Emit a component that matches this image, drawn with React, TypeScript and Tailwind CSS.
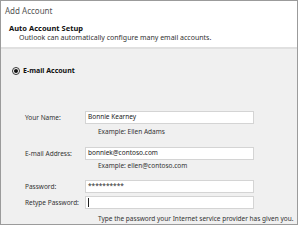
import React from 'react';

const font = { fontFamily: '"Noto Sans", "Open Sans", Arial, sans-serif' };

function Field({ label, value, cursor }: { label: string; value?: string; cursor?: boolean }) {
  return (
    <div className="flex items-center h-[13px]">
      <div className="w-[60px] pl-[24px] box-content text-[6.5px] text-[#333] whitespace-nowrap">{label}</div>
      <div className="w-[169px] h-[13px] bg-white border border-[#d4d4d4] flex items-center px-[2px] text-[6.5px] text-[#222] leading-none">
        {cursor && <span className="w-px h-[9px] bg-[#222]" />}
        {value}
      </div>
    </div>
  );
}

export default function App() {
  return (
    <div className="w-[300px] h-[226px] bg-white" style={font}>
      <div className="w-[298px] h-[225px] border border-[#9b9b9b] flex flex-col overflow-hidden">
        <div className="h-[48px] bg-white flex flex-col">
          <div className="pl-[4px] pt-[4px] text-[8px] text-[#555] leading-[11px]">Add Account</div>
          <div className="pl-[8px] pt-[7px] text-[7.5px] font-bold text-[#111] leading-[10px]">Auto Account Setup</div>
          <div className="pl-[18px] text-[7px] text-[#333] leading-[10px]">Outlook can automatically configure many email accounts.</div>
        </div>
        <div className="h-[2px] bg-[#e0e0e0]" />
        <div className="flex-1 bg-[#f0f0f0] flex flex-col">
          <div className="flex items-center pl-[11px] pt-[17px] gap-[3px]">
            <span className="w-[8px] h-[8px] rounded-full border border-[#333] bg-white flex items-center justify-center">
              <span className="w-[4px] h-[4px] rounded-full bg-[#111]" />
            </span>
            <span className="text-[7px] font-bold text-[#111] leading-[10px]">E-mail Account</span>
          </div>
          <div className="mt-[35px]">
            <Field label="Your Name:" value="Bonnie Kearney" />
          </div>
          <div className="pl-[97px] mt-[3px] text-[6.5px] text-[#333] leading-[10px]">Example: Ellen Adams</div>
          <div className="mt-[10px]">
            <Field label="E-mail Address:" value="bonniek@contoso.com" />
          </div>
          <div className="pl-[97px] mt-[1px] text-[6.5px] text-[#333] leading-[10px]">Example: ellen@contoso.com</div>
          <div className="mt-[9px]">
            <Field label="Password:" value="**********" />
          </div>
          <div className="mt-[3px]">
            <Field label="Retype Password:" cursor />
          </div>
          <div className="pl-[97px] mt-[5px] text-[6.5px] text-[#333] leading-[10px] whitespace-nowrap">Type the password your Internet service provider has given you.</div>
        </div>
      </div>
    </div>
  );
}
